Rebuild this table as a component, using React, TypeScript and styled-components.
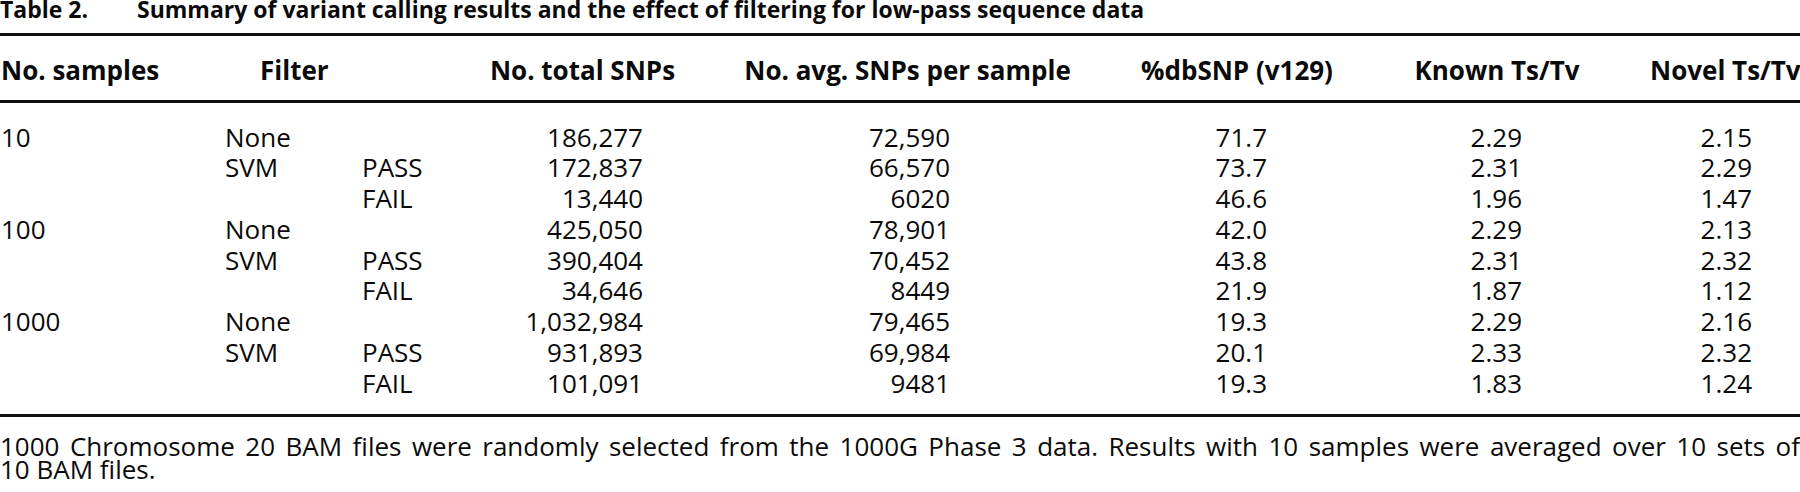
import React from "react";
import styled, { createGlobalStyle } from "styled-components";

const Global = createGlobalStyle`
  html, body {
    margin: 0;
    padding: 0;
    background: #ffffff;
    overflow: hidden;
  }
  body {
    font-family: "Open Sans", "Liberation Sans", sans-serif;
    color: #0a0a0a;
  }
`;

// column tracks: samples | filter | sub-filter | total | avg | dbSNP | known | novel
const COLS = "225px 137px 118px 205px 445px 214px 306px 150px";

const Page = styled.div`
  width: 1800px;
  height: 492px;
  overflow: hidden;
`;

const Title = styled.h2`
  margin: 0;
  font-size: 23px;
  font-weight: 700;
  line-height: 18px;
  white-space: nowrap;
`;

const Label = styled.span`
  display: inline-block;
  width: 137px;
`;

const Rule = styled.div<{ $gap?: number }>`
  height: 3px;
  background: #111;
  margin-top: ${(p) => p.$gap ?? 0}px;
`;

const HeadRow = styled.div`
  display: grid;
  grid-template-columns: ${COLS};
  box-sizing: border-box;
  height: 64px;
  padding-top: 4px;
  font-size: 26px;
  font-weight: 700;
  line-height: 60px;
`;

const Body = styled.div`
  padding: 18.5px 0 15.3px;
`;

const Row = styled.div`
  display: grid;
  grid-template-columns: ${COLS};
  font-size: 26px;
  line-height: 30.8px;
`;

const Cell = styled.div<{ $align?: "left" | "center" | "right"; $pr?: number; $pl?: number; $span?: number }>`
  text-align: ${(p) => p.$align ?? "left"};
  padding-right: ${(p) => p.$pr ?? 0}px;
  padding-left: ${(p) => p.$pl ?? 0}px;
  grid-column: span ${(p) => p.$span ?? 1};
  white-space: nowrap;
`;

const Note = styled.div`
  margin-top: 18.4px;
  font-size: 26px;
  line-height: 23px;
`;

const NoteLine = styled.div<{ $justify?: boolean }>`
  text-align: ${(p) => (p.$justify ? "justify" : "left")};
  text-align-last: ${(p) => (p.$justify ? "justify" : "auto")};
  white-space: ${(p) => (p.$justify ? "normal" : "nowrap")};
`;

type Rec = {
  n: string;
  filter: string;
  sub: string;
  total: string;
  avg: string;
  db: string;
  known: string;
  novel: string;
};

const rows: Rec[] = [
  { n: "10", filter: "None", sub: "", total: "186,277", avg: "72,590", db: "71.7", known: "2.29", novel: "2.15" },
  { n: "", filter: "SVM", sub: "PASS", total: "172,837", avg: "66,570", db: "73.7", known: "2.31", novel: "2.29" },
  { n: "", filter: "", sub: "FAIL", total: "13,440", avg: "6020", db: "46.6", known: "1.96", novel: "1.47" },
  { n: "100", filter: "None", sub: "", total: "425,050", avg: "78,901", db: "42.0", known: "2.29", novel: "2.13" },
  { n: "", filter: "SVM", sub: "PASS", total: "390,404", avg: "70,452", db: "43.8", known: "2.31", novel: "2.32" },
  { n: "", filter: "", sub: "FAIL", total: "34,646", avg: "8449", db: "21.9", known: "1.87", novel: "1.12" },
  { n: "1000", filter: "None", sub: "", total: "1,032,984", avg: "79,465", db: "19.3", known: "2.29", novel: "2.16" },
  { n: "", filter: "SVM", sub: "PASS", total: "931,893", avg: "69,984", db: "20.1", known: "2.33", novel: "2.32" },
  { n: "", filter: "", sub: "FAIL", total: "101,091", avg: "9481", db: "19.3", known: "1.83", novel: "1.24" },
];

export default function App() {
  return (
    <Page>
      <Global />
      <Title>
        <Label>Table 2.</Label>
        Summary of variant calling results and the effect of filtering for low-pass sequence data
      </Title>
      <Rule $gap={15} />
      <HeadRow>
        <Cell $pl={1}>No. samples</Cell>
        <Cell $span={2} $pl={35}>Filter</Cell>
        <Cell $align="center">No. total SNPs</Cell>
        <Cell $align="center">No. avg. SNPs per sample</Cell>
        <Cell $align="center">%dbSNP (v129)</Cell>
        <Cell $align="center">Known Ts/Tv</Cell>
        <Cell>Novel Ts/Tv</Cell>
      </HeadRow>
      <Rule />
      <Body>
        {rows.map((r, i) => (
          <Row key={i}>
            <Cell $pl={1}>{r.n}</Cell>
            <Cell>{r.filter}</Cell>
            <Cell>{r.sub}</Cell>
            <Cell $align="right" $pr={42}>{r.total}</Cell>
            <Cell $align="right" $pr={180}>{r.avg}</Cell>
            <Cell $align="right" $pr={77}>{r.db}</Cell>
            <Cell $align="right" $pr={128}>{r.known}</Cell>
            <Cell $align="right" $pr={48}>{r.novel}</Cell>
          </Row>
        ))}
      </Body>
      <Rule />
      <Note>
        <NoteLine $justify>
          1000 Chromosome 20 BAM files were randomly selected from the 1000G Phase 3 data. Results with 10 samples were
          averaged over 10 sets of
        </NoteLine>
        <NoteLine>10 BAM files.</NoteLine>
      </Note>
    </Page>
  );
}
